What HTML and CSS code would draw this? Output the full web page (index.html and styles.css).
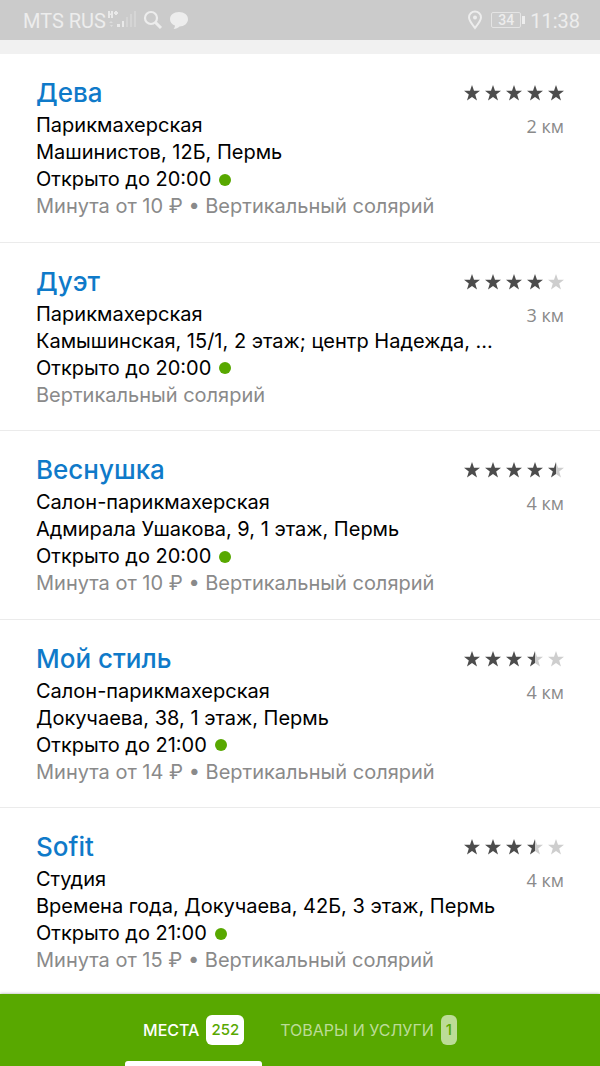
FILE: index.html
```
<!DOCTYPE html>
<html lang="ru">
<head>
<meta charset="utf-8">
<meta name="viewport" content="width=device-width, initial-scale=1">
<title>Солярии в Перми</title>
<link rel="stylesheet" href="styles.css">
</head>
<body>
<svg class="defs" aria-hidden="true">
  <defs>
    <linearGradient id="half"><stop offset="50%" stop-color="#4c4c4c"/><stop offset="50%" stop-color="#cecece"/></linearGradient>
    <symbol id="star" viewBox="0 0 16 16"><path d="M8 0l2 5.800h6L11.200 9.600 13 15.500 8 12 3 15.500 4.800 9.600 0 5.800h6z"/></symbol>
  </defs>
</svg>
<header class="status">
  <div class="status-group">
    <span class="carrier">MTS RUS</span>
    <svg class="signal" width="30" height="20" viewBox="0 0 30 20" fill="#e9e9e9" aria-hidden="true">
      <path d="M1 1h2v2.500h1V1h2v7H4V5H3v3H1zM7 2h1V1h2v1h1v2h-1v1H8V4H7z"/>
      <path d="M2 13l2-2 2 2zM3 15h3l-1.500 2z" opacity=".6"/>
      <path d="M10 14h3v3h-3zM15 11h2v6h-2z"/>
      <path d="M19 7h2v10h-2zM23 4h2v13h-2zM27 1h2v16h-2z" opacity=".35"/>
    </svg>
    <svg width="20" height="20" viewBox="0 0 20 20" fill="none" stroke="#ededed" aria-hidden="true">
      <circle cx="8" cy="8" r="6" stroke-width="2.200"/><path d="M12.500 12.500l5.500 5.500" stroke-width="3"/>
    </svg>
    <svg width="20" height="20" viewBox="0 0 20 20" fill="#ededed" aria-hidden="true">
      <path d="M10 2c5.200 0 9 3.100 9 7.200s-3.800 7.200-8.500 7.200c-1.500 1.600-3.500 2.400-6 2.600 1-1 1.500-2.300 1.400-3.500C2.900 14.300 1 12 1 9.200 1 5.100 4.800 2 10 2z"/>
    </svg>
  </div>
  <div class="status-group">
    <svg width="16" height="20" viewBox="0 0 16 20" fill="none" stroke="#ededed" stroke-width="2" aria-hidden="true">
      <path d="M8 18C4.500 13.500 2 10.500 2 7.500a6 6 0 0 1 12 0c0 3-2.500 6-6 10.500z"/><circle cx="8" cy="7.500" r="2" fill="#ededed" stroke="none"/>
    </svg>
    <span class="battery">34</span>
    <time>11:38</time>
  </div>
</header>

<main class="list">
  <article class="card">
    <div class="info">
      <h2><a href="#deva">Дева</a></h2>
      <p>Парикмахерская</p>
      <p>Машинистов, 12Б, Пермь</p>
      <p class="open">Открыто до 20:00</p>
      <p class="note">Минута от 10 ₽ • Вертикальный солярий</p>
    </div>
    <div class="side">
      <div class="stars" role="img" aria-label="Рейтинг 5 из 5"><svg><use href="#star"/></svg><svg><use href="#star"/></svg><svg><use href="#star"/></svg><svg><use href="#star"/></svg><svg><use href="#star"/></svg></div>
      <p class="distance">2 км</p>
    </div>
  </article>
  <article class="card">
    <div class="info">
      <h2><a href="#duet">Дуэт</a></h2>
      <p>Парикмахерская</p>
      <p>Камышинская, 15/1, 2 этаж; центр Надежда, ...</p>
      <p class="open">Открыто до 20:00</p>
      <p class="note">Вертикальный солярий</p>
    </div>
    <div class="side">
      <div class="stars" role="img" aria-label="Рейтинг 4 из 5"><svg><use href="#star"/></svg><svg><use href="#star"/></svg><svg><use href="#star"/></svg><svg><use href="#star"/></svg><svg class="off"><use href="#star"/></svg></div>
      <p class="distance">3 км</p>
    </div>
  </article>
  <article class="card">
    <div class="info">
      <h2><a href="#vesnushka">Веснушка</a></h2>
      <p>Салон-парикмахерская</p>
      <p>Адмирала Ушакова, 9, 1 этаж, Пермь</p>
      <p class="open">Открыто до 20:00</p>
      <p class="note">Минута от 10 ₽ • Вертикальный солярий</p>
    </div>
    <div class="side">
      <div class="stars" role="img" aria-label="Рейтинг 4,5 из 5"><svg><use href="#star"/></svg><svg><use href="#star"/></svg><svg><use href="#star"/></svg><svg><use href="#star"/></svg><svg class="half"><use href="#star"/></svg></div>
      <p class="distance">4 км</p>
    </div>
  </article>
  <article class="card">
    <div class="info">
      <h2><a href="#moy-stil">Мой стиль</a></h2>
      <p>Салон-парикмахерская</p>
      <p>Докучаева, 38, 1 этаж, Пермь</p>
      <p class="open">Открыто до 21:00</p>
      <p class="note">Минута от 14 ₽ • Вертикальный солярий</p>
    </div>
    <div class="side">
      <div class="stars" role="img" aria-label="Рейтинг 3,5 из 5"><svg><use href="#star"/></svg><svg><use href="#star"/></svg><svg><use href="#star"/></svg><svg class="half"><use href="#star"/></svg><svg class="off"><use href="#star"/></svg></div>
      <p class="distance">4 км</p>
    </div>
  </article>
  <article class="card">
    <div class="info">
      <h2><a href="#sofit">Sofit</a></h2>
      <p>Студия</p>
      <p>Времена года, Докучаева, 42Б, 3 этаж, Пермь</p>
      <p class="open">Открыто до 21:00</p>
      <p class="note">Минута от 15 ₽ • Вертикальный солярий</p>
    </div>
    <div class="side">
      <div class="stars" role="img" aria-label="Рейтинг 3,5 из 5"><svg><use href="#star"/></svg><svg><use href="#star"/></svg><svg><use href="#star"/></svg><svg class="half"><use href="#star"/></svg><svg class="off"><use href="#star"/></svg></div>
      <p class="distance">4 км</p>
    </div>
  </article>
</main>

<nav class="tabs">
  <button class="tab active" type="button">МЕСТА <span class="count">252</span></button>
  <button class="tab" type="button">ТОВАРЫ И УСЛУГИ <span class="count">1</span></button>
</nav>
</body>
</html>
```
FILE: styles.css
```
* { box-sizing: border-box; }

body {
  margin: 0;
  min-height: 100vh;
  display: flex;
  flex-direction: column;
  background: #fff;
  color: #000;
  font-family: Inter, "Liberation Sans", sans-serif;
}

h2, p { margin: 0; }

.defs { position: absolute; width: 0; height: 0; }

.status {
  display: flex;
  justify-content: space-between;
  align-items: center;
  height: 40px;
  padding: 0 20px 0 23px;
  background: #cbcbcb;
  color: #ededed;
  font: 20px/40px Roboto, sans-serif;
}

.status-group { display: flex; align-items: center; gap: 6px; }
.carrier { margin-right: -5px; padding-top: 2px; }
.status time { padding-top: 2px; }

.battery {
  position: relative;
  width: 30px;
  height: 16px;
  margin: 0 3px 0 2px;
  border: 1px solid #e4e4e4;
  border-radius: 2px;
  font-size: 14px;
  font-weight: 500;
  line-height: 15px;
  text-align: center;
}

.battery::after {
  content: "";
  position: absolute;
  right: -5px;
  top: 3px;
  width: 3px;
  height: 8px;
  background: #ededed;
}

.list {
  flex: 1;
  display: flex;
  flex-direction: column;
  margin-bottom: -3px;
  border-top: 14px solid #f1f1f1;
}

.card {
  flex: 1;
  display: flex;
  justify-content: space-between;
  padding: 20px 36px 0;
  border-bottom: 1px solid #ebebeb;
}

.info { flex: 1; min-width: 0; font-size: 20px; line-height: 27px; white-space: nowrap; }
.info h2 { font-size: 26px; line-height: 38px; font-weight: 500; }
.info a { color: #0f7ac9; text-decoration: none; }
.note { color: #8a8a8a; }

.open { display: flex; align-items: center; gap: 8px; }
.open::after {
  content: "";
  width: 12px;
  height: 12px;
  border-radius: 50%;
  background: #58a800;
}

.side { text-align: right; }
.stars { display: flex; align-items: center; gap: 5px; height: 38px; fill: #4c4c4c; }
.stars svg { width: 16px; height: 16px; }
.stars .off { fill: #cecece; }
.stars .half { fill: url(#half); }
.distance { font: 18px/28px "Open Sans", sans-serif; color: #8a8a8a; }

.tabs {
  position: relative;
  display: flex;
  justify-content: center;
  height: 72px;
  background: #58a800;
  box-shadow: 0 0 3px rgba(0, 0, 0, .35);
}

.tab {
  display: flex;
  align-items: center;
  gap: 7px;
  padding: 5px 18px 0;
  border: 0;
  border-bottom: 5px solid transparent;
  background: none;
  color: #bcdc97;
  font: 16px/30px Inter, "Liberation Sans", sans-serif;
}

.count {
  padding: 0 5px;
  border-radius: 6px;
  background: #bcdc97;
  color: #58a800;
  font-size: 15px;
  font-weight: 500;
}

.active { position: relative; color: #fff; font-weight: 500; }
.active .count { background: #fff; }
.active::after {
  content: "";
  position: absolute;
  left: 0;
  right: 0;
  bottom: -5px;
  height: 5px;
  border-radius: 3px 3px 0 0;
  background: #fff;
}
```
